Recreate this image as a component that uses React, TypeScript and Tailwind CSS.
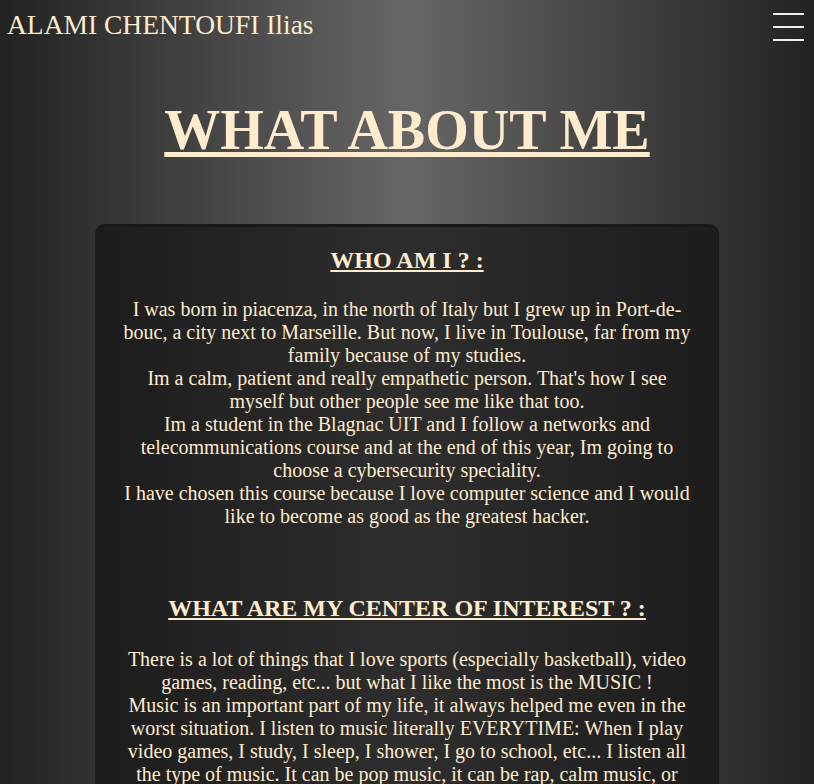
export default function App() {
  return (
    <div
      className="min-h-[784px] bg-[linear-gradient(to_right,#222222,#666666,#222222)] text-[#ffebcd]"
      style={{ fontFamily: '"Liberation Serif", "Times New Roman", serif' }}
    >
      {/* Header */}
      <header className="flex items-start justify-between h-[60px]">
        <div className="pl-[7px] pt-[9px] text-[27.5px] leading-[32px]">ALAMI CHENTOUFI Ilias</div>
        <button className="mr-[10px] mt-[13px] flex flex-col gap-[11px] w-[31px]">
          <span className="block h-[2px] bg-[#eeeeee]" />
          <span className="block h-[2px] bg-[#eeeeee]" />
          <span className="block h-[2px] bg-[#eeeeee]" />
        </button>
      </header>

      <h1 className="text-center font-bold text-[56px] leading-[64px] underline mt-[38px]">WHAT ABOUT ME</h1>

      {/* Content card */}
      <main className="mx-auto mt-[62px] w-[624px] rounded-t-[10px] border-t-[3px] border-[#181818] bg-[linear-gradient(to_right,#1c1c1c,#2e2e2e,#1c1c1c)] px-[28px] pt-[19px] pb-[40px] text-center">
        <h2 className="text-[24px] leading-[28px] font-bold underline">WHO AM I ? :</h2>
        <p className="mt-[24px] text-[20px] leading-[23px]">
          I was born in piacenza, in the north of Italy but I grew up in Port-de-bouc, a city next to Marseille. But now, I live in Toulouse, far from my family because of my studies.
          <br />
          Im a calm, patient and really empathetic person. That's how I see myself but other people see me like that too.
          <br />
          Im a student in the Blagnac UIT and I follow a networks and telecommunications course and at the end of this year, Im going to choose a cybersecurity speciality.
          <br />
          I have chosen this course because I love computer science and I would like to become as good as the greatest hacker.
        </p>

        <h2 className="mt-[66px] text-[24px] leading-[28px] font-bold underline">WHAT ARE MY CENTER OF INTEREST ? :</h2>
        <p className="mt-[26px] text-[20px] leading-[23px]">
          There is a lot of things that I love sports (especially basketball), video games, reading, etc... but what I like the most is the MUSIC !
          <br />
          Music is an important part of my life, it always helped me even in the worst situation. I listen to music literally EVERYTIME: When I play video games, I study, I sleep, I shower, I go to school, etc... I listen all the type of music. It can be pop music, it can be rap, calm music, or even classical music, it depends on my mood.
        </p>
      </main>
    </div>
  );
}
